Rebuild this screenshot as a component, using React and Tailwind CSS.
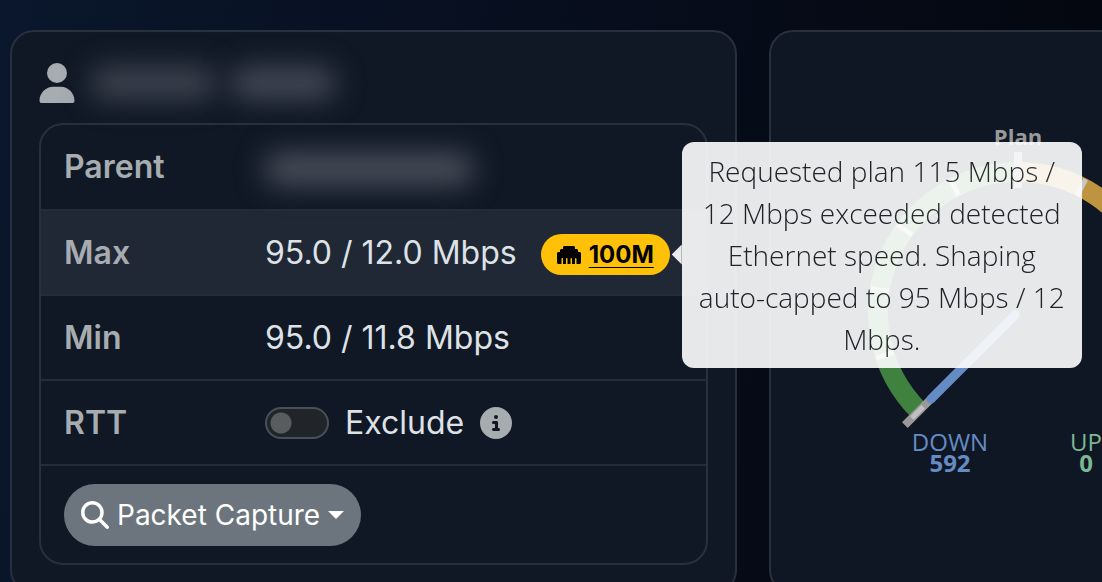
import React, { Component } from "react";
import { FaUser, FaMagnifyingGlass, FaCircleInfo, FaEthernet } from "react-icons/fa6";

const ticks = [-108, -81, -54, -27, 27, 54, 81, 108];

//Punkt auf dem Kreis, 0 Grad ist oben
function point(radius, deg) {
  const rad = (deg * Math.PI) / 180;
  return [180 + radius * Math.sin(rad), 180 - radius * Math.cos(rad)];
}

function arc(radius, from, to) {
  const [x1, y1] = point(radius, from);
  const [x2, y2] = point(radius, to);
  return `M${x1} ${y1}A${radius} ${radius} 0 0 1 ${x2} ${y2}`;
}

class Tick extends Component {
  render() {
    const { deg, inner, outer, width, color } = this.props;
    const [x1, y1] = point(inner, deg);
    const [x2, y2] = point(outer, deg);
    return (
      <line x1={x1} y1={y1} x2={x2} y2={y2} stroke={color} strokeWidth={width} />
    );
  }
}

class Gauge extends Component {
  render() {
    const [nx, ny] = point(123, -135);
    return (
      <svg
        className="h-[380px] w-[360px] shrink-0 font-['Open_Sans',sans-serif] text-2xl"
        viewBox="0 -20 360 380"
        textAnchor="middle"
      >
        <path d={arc(140, -135, 0)} fill="none" stroke="#408140" strokeWidth="20" />
        <path d={arc(140, 0, 67)} fill="none" stroke="#bf9440" strokeWidth="20" />
        <path d={arc(140, 67, 135)} fill="none" stroke="#bf4040" strokeWidth="20" />
        {ticks.map((deg) => (
          <Tick key={deg} deg={deg} inner={131} outer={149} width={5} color="#c6c6c6" />
        ))}
        <Tick deg={-135} inner={124} outer={160} width={8} color="#999999" />
        <Tick deg={-135} inner={134} outer={150} width={5} color="#c0c0c0" />
        <Tick deg={0} inner={124} outer={160} width={8} color="#999999" />
        <line
          x1="177"
          y1="183"
          x2={nx}
          y2={ny}
          stroke="#658bc4"
          strokeWidth="9"
          strokeLinecap="round"
        />
        <text x="180" y="13" fill="#999999" fontWeight="700" className="text-[22px]">Plan</text>
        <text x="112" y="319" fill="#658bc4">DOWN</text>
        <text x="112" y="340" fill="#658bc4" fontWeight="700">592</text>
        <text x="248" y="319" fill="#7cb894">UP</text>
        <text x="248" y="340" fill="#7cb894" fontWeight="700">0</text>
      </svg>
    );
  }
}

class Tooltip extends Component {
  render() {
    return (
      <div
        role="tooltip"
        className="absolute top-1/2 left-full z-10 ml-3 w-[400px] -translate-y-1/2 rounded-xl bg-white px-4 py-2 text-center font-['Open_Sans',sans-serif] text-[28px] leading-[42px] font-[350] whitespace-normal text-[#212529] opacity-90"
      >
        <span className="absolute top-1/2 right-full h-5 w-[10px] -translate-y-1/2 bg-white [clip-path:polygon(100%_0,0_50%,100%_100%)]"></span>
        {this.props.text}
      </div>
    );
  }
}

class SpeedBadge extends Component {
  render() {
    return (
      <span className="relative mt-1">
        <button
          type="button"
          className="flex h-[41px] items-center gap-2 rounded-full bg-[#ffc107] px-4 text-2xl font-bold text-black"
        >
          <FaEthernet />
          <span className="underline decoration-1 underline-offset-4">100M</span>
        </button>
        <Tooltip text="Requested plan 115 Mbps / 12 Mbps exceeded detected Ethernet speed. Shaping auto-capped to 95 Mbps / 12 Mbps." />
      </span>
    );
  }
}

class Row extends Component {
  render() {
    return (
      <tr className={"h-[85px] border-b-2 border-[#232d3a] " + (this.props.className || "")}>
        <th scope="row" className="w-[224px] pl-[23px] text-left font-semibold text-[#a7acb1]">
          {this.props.label}
        </th>
        <td>
          <div className="flex items-center whitespace-nowrap">{this.props.children}</div>
        </td>
      </tr>
    );
  }
}

class CircuitTable extends Component {
  render() {
    return (
      <div className="rounded-3xl border-2 border-[#28303d]">
        <table className="w-full table-fixed border-collapse">
          <tbody>
            <Row label="Parent">
              <span className="mt-1 h-8 w-[208px] rounded-xl bg-[#4b505c] blur-[14px]"></span>
            </Row>
            <Row label="Max" className="bg-[#202836]">
              <span className="mr-6">95.0 / 12.0 Mbps</span>
              <SpeedBadge />
            </Row>
            <Row label="Min">95.0 / 11.8 Mbps</Row>
            <Row label="RTT">
              <label className="flex items-center gap-4">
                <input
                  type="checkbox"
                  role="switch"
                  className="h-8 w-16 appearance-none rounded-full border-2 border-[#495057] bg-[#212529] bg-[radial-gradient(circle_at_14px_14px,#595c5f_10px,transparent_11px)]"
                />
                Exclude
              </label>
              <FaCircleInfo className="ml-4 text-[#a7acb1]" />
            </Row>
            <tr className="h-[98px]">
              <td colSpan={2} className="pl-[23px]">
                <button
                  type="button"
                  className="flex h-[62px] items-center gap-2 rounded-full bg-[#6c757d] px-[17px] text-[28px] text-white"
                >
                  <FaMagnifyingGlass />
                  Packet Capture
                  <svg className="h-2 w-4" viewBox="0 0 16 8" fill="currentColor">
                    <path d="M0 0H16L8 8Z" />
                  </svg>
                </button>
              </td>
            </tr>
          </tbody>
        </table>
      </div>
    );
  }
}

class App extends Component {
  render() {
    return (
      <main className="h-screen overflow-hidden bg-[linear-gradient(100deg,#0a172c_0%,#070e1e_45%,#04060d_100%)] pt-[30px] pl-[10px] font-[Inter,sans-serif] text-[32px] leading-10 text-[#dee2e6]">
        <div className="flex gap-8">
          <section className="w-[727px] shrink-0 rounded-3xl border-2 border-[#28303d] bg-[#101825] p-[27px]">
            <h2 className="mb-4 flex h-12 items-center gap-4">
              <FaUser className="h-10 w-9 text-[#a7acb1]" />
              <span className="h-8 w-[124px] rounded-xl bg-[#3f4551] blur-[14px]"></span>
              <span className="h-8 w-[104px] rounded-xl bg-[#454a57] blur-[14px]"></span>
            </h2>
            <CircuitTable />
          </section>
          <section className="flex w-[498px] shrink-0 justify-center rounded-3xl border-2 border-[#28303d] bg-[#101724] pt-20">
            <Gauge />
          </section>
        </div>
      </main>
    );
  }
}

export default App;
